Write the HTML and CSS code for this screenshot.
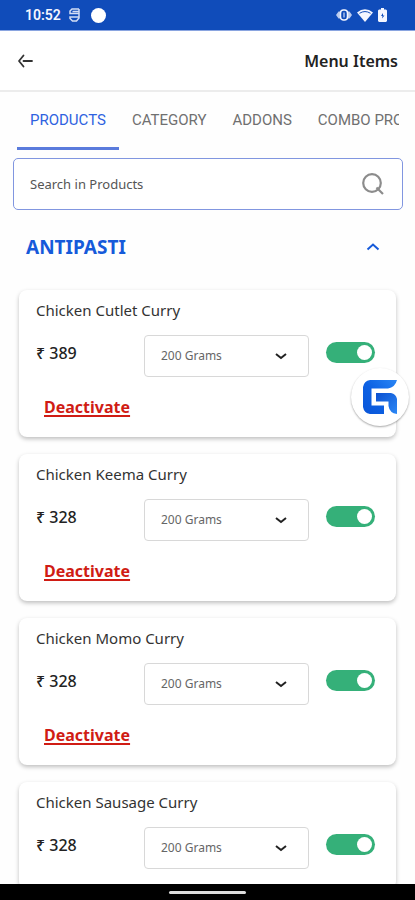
FILE: index.html
```html
<!DOCTYPE html>
<html lang="en">
<head>
<meta charset="utf-8">
<meta name="viewport" content="width=device-width, initial-scale=1">
<title>Menu Items</title>
<link rel="stylesheet" href="styles.css">
</head>
<body>
<div class="status">
  <span class="clock">10:52</span>
  <svg class="status-app" width="11" height="14" viewBox="0 0 11 14" fill="none" stroke="currentColor" stroke-width="1.500"><path d="M10 1H3L1 3v2.500h9M10 1v9L7.500 13h-4L1 10.500V9h9M3.500 3.500H10"/></svg>
  <span class="status-dot"></span>
  <span class="status-icons">
    <svg width="16" height="12" viewBox="0 0 16 12"><path d="M0 6l2.500-3.500H5v7H2.500zM16 6l-2.500-3.500H11v7h2.500z" fill="currentColor" opacity=".75"/><rect x="4.500" y="1" width="7" height="10" rx="3" fill="none" stroke="currentColor" stroke-width="1.500"/><path d="M8 3.500v5" stroke="currentColor" stroke-width="1"/></svg>
    <svg width="16" height="13" viewBox="0 0 16 13"><path d="M0 3.500Q8-3 16 3.500L8 13z" fill="currentColor"/><path d="M2.500 4.300Q8 .8 13.500 4.300" fill="none" stroke="#104cba" stroke-width="1"/></svg>
    <svg width="9" height="14" viewBox="0 0 9 14"><path d="M3 0h3v1.500h2l1 1V13l-1 1H1l-1-1V2.500l1-1h2z" fill="currentColor"/><path d="M5 5L3 8h1.500L4 10.500 6.500 7.500H5z" fill="#104cba"/></svg>
  </span>
</div>
<header class="topbar">
  <button class="back" aria-label="Back"><svg width="16" height="14" viewBox="0 0 16 14" fill="none" stroke="currentColor" stroke-width="1.800" stroke-linecap="round" stroke-linejoin="round"><path d="M6.500 1.500L2 7l4.500 5.500M6.500 7h8.500"/></svg></button>
  <h1>Menu Items</h1>
</header>
<nav class="tabs">
  <button class="tab active">PRODUCTS</button>
  <button class="tab">CATEGORY</button>
  <button class="tab">ADDONS</button>
  <button class="tab">COMBO PRODUCTS</button>
</nav>
<main>
  <div class="search">
    <input type="text" placeholder="Search in Products" aria-label="Search in Products">
    <svg width="24" height="24" viewBox="0 0 24 24" fill="none" stroke="currentColor" stroke-width="2.200"><circle cx="11" cy="11" r="8.800"/><path d="M15.500 15.500l6.500 6.500"/></svg>
  </div>
  <button class="group">
    <span>ANTIPASTI</span>
    <svg width="14" height="10" viewBox="0 0 14 10" fill="none" stroke="currentColor" stroke-width="2"><path d="M1.500 7.500L7 2.500l5.500 5"/></svg>
  </button>
  <section class="items">
    <article class="card">
      <h2>Chicken Cutlet Curry</h2>
      <div class="row">
        <span class="price">₹ 389</span>
        <div class="portion"><select aria-label="Chicken Cutlet Curry portion"><option>200 Grams</option></select><svg width="12" height="8" viewBox="0 0 12 8"><path d="M1 2l5 4 5-4"/></svg></div>
        <input class="toggle" type="checkbox" checked aria-label="Chicken Cutlet Curry available">
      </div>
      <button class="deactivate">Deactivate</button>
    </article>
    <article class="card">
      <h2>Chicken Keema Curry</h2>
      <div class="row">
        <span class="price">₹ 328</span>
        <div class="portion"><select aria-label="Chicken Keema Curry portion"><option>200 Grams</option></select><svg width="12" height="8" viewBox="0 0 12 8"><path d="M1 2l5 4 5-4"/></svg></div>
        <input class="toggle" type="checkbox" checked aria-label="Chicken Keema Curry available">
      </div>
      <button class="deactivate">Deactivate</button>
    </article>
    <article class="card">
      <h2>Chicken Momo Curry</h2>
      <div class="row">
        <span class="price">₹ 328</span>
        <div class="portion"><select aria-label="Chicken Momo Curry portion"><option>200 Grams</option></select><svg width="12" height="8" viewBox="0 0 12 8"><path d="M1 2l5 4 5-4"/></svg></div>
        <input class="toggle" type="checkbox" checked aria-label="Chicken Momo Curry available">
      </div>
      <button class="deactivate">Deactivate</button>
    </article>
    <article class="card">
      <h2>Chicken Sausage Curry</h2>
      <div class="row">
        <span class="price">₹ 328</span>
        <div class="portion"><select aria-label="Chicken Sausage Curry portion"><option>200 Grams</option></select><svg width="12" height="8" viewBox="0 0 12 8"><path d="M1 2l5 4 5-4"/></svg></div>
        <input class="toggle" type="checkbox" checked aria-label="Chicken Sausage Curry available">
      </div>
    </article>
  </section>
</main>
<button class="fab" aria-label="Quick actions">
  <svg width="34" height="34" viewBox="0 0 34 34">
    <defs><linearGradient id="g1" x1="0" y1="1" x2="1" y2="0"><stop offset="0" stop-color="#0a55d8"/><stop offset=".5" stop-color="#0d62e4"/><stop offset="1" stop-color="#2a86f5"/></linearGradient><linearGradient id="g2" x1="0" y1="0" x2="1" y2="1"><stop offset="0" stop-color="#0b50d0"/><stop offset="1" stop-color="#2c88f6"/></linearGradient></defs>
    <path d="M7 0H34Q32 7.500 25 8.500H8.500V25.500H21V34H7Q1 33 0 27V7Q1 1 7 0z" fill="url(#g1)"/>
    <path d="M13 13H28Q33 14 34 19V34Q26.500 33 25.500 26V21.500H13z" fill="url(#g2)"/>
  </svg>
</button>
<footer class="gesture"><span></span></footer>
</body>
</html>
```
FILE: styles.css
```css
* { box-sizing: border-box; }
body {
  margin: 0;
  height: 100vh;
  display: flex;
  flex-direction: column;
  overflow: hidden;
  background: #fefefe;
  color: #222;
  font-family: "Noto Sans", sans-serif;
}
button {
  border: 0;
  padding: 0;
  background: none;
  color: inherit;
  font: inherit;
  cursor: pointer;
}
svg { display: block; flex: none; }
h1, h2 { margin: 0; }

.status {
  flex: none;
  display: flex;
  align-items: center;
  height: 31px;
  padding: 0 28px 0 25px;
  background: #104cba;
  border-bottom: 1px solid #8aa5e0;
  color: #f4f6ff;
}
.clock {
  font: 600 14px/20px Roboto, sans-serif;
}
.status-app { margin-left: 8px; opacity: .85; }
.status-dot {
  width: 15px;
  height: 15px;
  margin-left: 11px;
  border-radius: 50%;
  background: #fff;
}
.status-icons {
  display: flex;
  align-items: center;
  gap: 5px;
  margin-left: auto;
}

.topbar {
  flex: none;
  display: flex;
  align-items: center;
  justify-content: space-between;
  height: 61px;
  padding: 0 17px;
  border-bottom: 2px solid #ececec;
  background: #fff;
}
.back { color: #333; }
h1 { font-size: 16px; line-height: 24px; font-weight: 600; }

.tabs {
  flex: none;
  display: flex;
  height: 58px;
  margin: 0 16px 0 17px;
  overflow: hidden;
}
.tab {
  flex: none;
  padding: 0 13px;
  border-bottom: 3px solid transparent;
  color: #707070;
  font: 400 15px/20px Roboto, sans-serif;
}
.tab.active { border-color: #5a7bdc; color: #2e62e0; }

main {
  flex: 1;
  min-height: 0;
  overflow: hidden;
  padding-top: 8px;
}
.search {
  display: flex;
  align-items: center;
  height: 52px;
  margin: 0 12px 0 13px;
  padding: 0 17px 0 16px;
  border: 1px solid #8196e0;
  border-radius: 5px;
  background: #fff;
  color: #8c8c8c;
}
.search input {
  flex: 1;
  min-width: 0;
  border: 0;
  padding: 0;
  outline: 0;
  background: none;
  font: 400 13px/20px "Noto Sans", sans-serif;
}
.search input::placeholder { color: #555; opacity: 1; }

.group {
  display: flex;
  align-items: center;
  justify-content: space-between;
  width: 100%;
  height: 74px;
  padding: 0 35px 0 26px;
  color: #165ada;
  font-size: 19px;
  font-weight: 700;
}

.items {
  display: flex;
  flex-direction: column;
  gap: 17px;
  padding: 6px 19px 0 19px;
}
.card {
  padding: 10px 21px 20px 17px;
  border-radius: 8px;
  background: #fff;
  box-shadow: 0 2px 4px rgba(0, 0, 0, .25);
}
h2 { font-size: 15px; line-height: 20px; font-weight: 400; color: #333; }
.row {
  display: flex;
  align-items: flex-start;
  margin-top: 15px;
}
.price {
  flex: 1;
  font-size: 16px;
  line-height: 36px;
  font-weight: 500;
}
.portion {
  display: grid;
  align-items: center;
  width: 165px;
}
.portion select, .portion svg { grid-area: 1 / 1; }
.portion select {
  appearance: none;
  width: 100%;
  height: 42px;
  padding: 0 16px;
  border: 1px solid #d8d8d8;
  border-radius: 4px;
  background: #fff;
  color: #666;
  font: 400 12px/20px "Noto Sans", sans-serif;
}
.portion svg {
  justify-self: end;
  margin-right: 22px;
  fill: none;
  stroke: #222;
  stroke-width: 2;
  pointer-events: none;
}
.toggle {
  appearance: none;
  display: flex;
  align-items: center;
  justify-content: flex-end;
  width: 49px;
  height: 21px;
  margin: 7px 0 0 17px;
  padding: 3px;
  border-radius: 11px;
  background: #35b079;
}
.toggle::before {
  content: "";
  width: 15px;
  height: 15px;
  border-radius: 50%;
  background: #fff;
}
.deactivate {
  display: block;
  margin: 20px 0 0 8px;
  color: #d01c14;
  font-size: 16px;
  line-height: 20px;
  font-weight: 700;
  text-decoration: underline;
  text-decoration-thickness: 2px;
  text-underline-offset: 2px;
}

.fab {
  position: fixed;
  top: 368px;
  right: 6px;
  display: flex;
  align-items: center;
  justify-content: center;
  width: 58px;
  height: 58px;
  border-radius: 50%;
  background: #fff;
  box-shadow: 0 1px 2px rgba(0, 0, 0, .35);
}

.gesture {
  flex: none;
  display: flex;
  align-items: center;
  justify-content: center;
  height: 16px;
  background: #000;
}
.gesture span {
  width: 77px;
  height: 3px;
  border-radius: 2px;
  background: #ddd;
}
```
